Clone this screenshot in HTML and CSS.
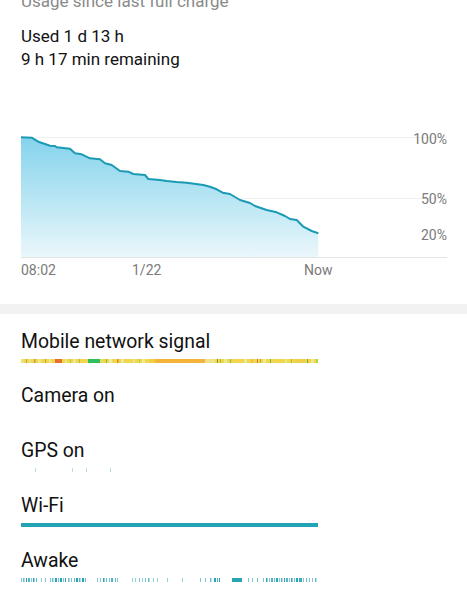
FILE: index.html
```html
<!DOCTYPE html>
<html lang="en">
<head>
  <meta charset="UTF-8">
  <meta name="viewport" content="width=device-width, initial-scale=1.0">
  <title>Battery usage</title>
  <link rel="stylesheet" href="styles.css">
</head>
<body>
  <div class="page">
    <!-- Summary -->
    <section class="summary">
      <h2 class="caption">Usage since last full charge</h2>
      <p class="line">Used 1 d 13 h</p>
      <p class="line">9 h 17 min remaining</p>
    </section>

    <!-- Battery level chart -->
    <div class="chart">
      <svg width="426" height="160" viewBox="0 0 426 160">
        <defs>
          <linearGradient id="fill" x1="0" y1="0" x2="0" y2="1">
            <stop offset="0" stop-color="#84d3ec"/>
            <stop offset="1" stop-color="#eaf7fb"/>
          </linearGradient>
        </defs>
        <line class="grid" x1="0" y1="17.5" x2="426" y2="17.5"/>
        <line class="grid" x1="0" y1="78.5" x2="426" y2="78.5"/>
        <line class="axis" x1="0" y1="137.5" x2="426" y2="137.5"/>
        <path fill="url(#fill)" d="M0,17.3 L10.7,17.7 L17.3,21.7 L24,24 L29,25.7 L34,26 L35.7,27.3 L49,28.7 L54,33.3 L60.7,34.3 L69,38.3 L79,39.3 L84,43.3 L90.7,45 L99,51 L107.3,51.7 L112.3,54 L124,55 L127.3,59 L139,60 L145.7,61 L155.7,62 L165.7,62.7 L182.3,65 L189,66.7 L195.7,69.3 L201.7,72.7 L209,74 L219,80 L229,83 L234,86 L245.7,90 L255.7,92.3 L264,96 L269,99 L275.7,100 L282.3,106.7 L290.7,111 L297.3,113.3 L297.3,137 L0,137 Z"/>
        <path class="level" d="M0,17.3 L10.7,17.7 L17.3,21.7 L24,24 L29,25.7 L34,26 L35.7,27.3 L49,28.7 L54,33.3 L60.7,34.3 L69,38.3 L79,39.3 L84,43.3 L90.7,45 L99,51 L107.3,51.7 L112.3,54 L124,55 L127.3,59 L139,60 L145.7,61 L155.7,62 L165.7,62.7 L182.3,65 L189,66.7 L195.7,69.3 L201.7,72.7 L209,74 L219,80 L229,83 L234,86 L245.7,90 L255.7,92.3 L264,96 L269,99 L275.7,100 L282.3,106.7 L290.7,111 L297.3,113.3"/>
        <text class="tick" x="426" y="23.5" text-anchor="end">100%</text>
        <text class="tick" x="426" y="84" text-anchor="end">50%</text>
        <text class="tick" x="426" y="120" text-anchor="end">20%</text>
        <text class="tick" x="0" y="155">08:02</text>
        <text class="tick" x="111" y="155">1/22</text>
        <text class="tick" x="283" y="155">Now</text>
      </svg>
    </div>

    <div class="divider"></div>

    <!-- Event rows -->
    <section class="events">
      <div class="event">
        <div class="event-title">Mobile network signal</div>
        <svg class="event-bar" width="297" height="4" viewBox="0 0 297 4">
          <rect x="0" y="0" width="297" height="4" fill="#f2d64b"/>
          <rect x="0" y="0" width="3" height="4" fill="#e8e27a"/>
          <rect x="5" y="0" width="1" height="4" fill="#e0a030"/>
          <rect x="8" y="0" width="2" height="4" fill="#dfe98a"/>
          <rect x="13" y="0" width="1.5" height="4" fill="#c9a23a"/>
          <rect x="17" y="0" width="3" height="4" fill="#e9ea8c"/>
          <rect x="24" y="0" width="1" height="4" fill="#d7a32c"/>
          <rect x="28" y="0" width="2" height="4" fill="#f0e68c"/>
          <rect x="34" y="0" width="7" height="4" fill="#e8702e"/>
          <rect x="44" y="0" width="2" height="4" fill="#e6ea8a"/>
          <rect x="49" y="0" width="1" height="4" fill="#b9c64a"/>
          <rect x="52" y="0" width="3" height="4" fill="#eee98c"/>
          <rect x="58" y="0" width="1" height="4" fill="#9ec43a"/>
          <rect x="67" y="0" width="12" height="4" fill="#2dbf62"/>
          <rect x="80" y="0" width="2" height="4" fill="#cfe36e"/>
          <rect x="85" y="0" width="1" height="4" fill="#8bb53a"/>
          <rect x="88" y="0" width="3" height="4" fill="#eeeaa0"/>
          <rect x="96" y="0" width="1.5" height="4" fill="#e08a30"/>
          <rect x="100" y="0" width="3" height="4" fill="#e9eb94"/>
          <rect x="112" y="0" width="2" height="4" fill="#dde985"/>
          <rect x="118" y="0" width="1" height="4" fill="#b6c94e"/>
          <rect x="121" y="0" width="3" height="4" fill="#eeea95"/>
          <rect x="128" y="0" width="6" height="4" fill="#f1cc45"/>
          <rect x="134" y="0" width="50" height="4" fill="#f4b43a"/>
          <rect x="184" y="0" width="10" height="4" fill="#f0e28a"/>
          <rect x="196" y="0" width="1" height="4" fill="#6fa83a"/>
          <rect x="199" y="0" width="1" height="4" fill="#9cbd3e"/>
          <rect x="203" y="0" width="3" height="4" fill="#e8e890"/>
          <rect x="209" y="0" width="1" height="4" fill="#8fb43a"/>
          <rect x="223" y="0" width="3" height="4" fill="#e9ea94"/>
          <rect x="230" y="0" width="2" height="4" fill="#f3c040"/>
          <rect x="236" y="0" width="1" height="4" fill="#e07a2e"/>
          <rect x="239" y="0" width="1" height="4" fill="#d6a43a"/>
          <rect x="242" y="0" width="3" height="4" fill="#eeea95"/>
          <rect x="249" y="0" width="1" height="4" fill="#7ab43e"/>
          <rect x="264" y="0" width="2" height="4" fill="#e5ea8a"/>
          <rect x="270" y="0" width="1" height="4" fill="#9ec43a"/>
          <rect x="274" y="0" width="10" height="4" fill="#f0d04a"/>
          <rect x="286" y="0" width="1" height="4" fill="#6fb03a"/>
          <rect x="290" y="0" width="3" height="4" fill="#f3e090"/>
          <rect x="295" y="0" width="2" height="4" fill="#a8d84a"/>
        </svg>
      </div>

      <div class="event">
        <div class="event-title">Camera on</div>
        <svg class="event-bar" width="297" height="4" viewBox="0 0 297 4"></svg>
      </div>

      <div class="event">
        <div class="event-title">GPS on</div>
        <svg class="event-bar" width="297" height="4" viewBox="0 0 297 4">
          <g fill="#b9dce6">
            <rect x="14" y="0" width="1" height="4"/>
            <rect x="51" y="0" width="1" height="4"/>
            <rect x="65" y="0" width="1" height="4"/>
            <rect x="89" y="0" width="1" height="4"/>
          </g>
        </svg>
      </div>

      <div class="event">
        <div class="event-title">Wi-Fi</div>
        <svg class="event-bar" width="297" height="4" viewBox="0 0 297 4">
          <rect x="0" y="0" width="297" height="4" fill="#22a4b5"/>
        </svg>
      </div>

      <div class="event">
        <div class="event-title">Awake</div>
        <svg class="event-bar" width="297" height="4" viewBox="0 0 297 4">
          <g fill="#2aa3b5">
            <rect x="0" y="0" width="1" height="4" opacity="0.6"/>
            <rect x="2" y="0" width="1.5" height="4" opacity="0.7"/>
            <rect x="5" y="0" width="1" height="4"/>
            <rect x="7" y="0" width="2" height="4" opacity="0.8"/>
            <rect x="10" y="0" width="1" height="4" opacity="0.6"/>
            <rect x="12" y="0" width="1.5" height="4"/>
            <rect x="15" y="0" width="1" height="4" opacity="0.7"/>
            <rect x="20" y="0" width="1" height="4" opacity="0.5"/>
            <rect x="24" y="0" width="1" height="4" opacity="0.6"/>
            <rect x="29" y="0" width="1" height="4" opacity="0.6"/>
            <rect x="31" y="0" width="1.5" height="4" opacity="0.7"/>
            <rect x="34" y="0" width="2" height="4"/>
            <rect x="37" y="0" width="1" height="4" opacity="0.7"/>
            <rect x="39" y="0" width="2" height="4"/>
            <rect x="42" y="0" width="1" height="4" opacity="0.6"/>
            <rect x="44" y="0" width="1" height="4"/>
            <rect x="47" y="0" width="1.5" height="4" opacity="0.7"/>
            <rect x="50" y="0" width="1" height="4" opacity="0.6"/>
            <rect x="53" y="0" width="1" height="4" opacity="0.7"/>
            <rect x="55" y="0" width="2" height="4"/>
            <rect x="58" y="0" width="1.5" height="4" opacity="0.8"/>
            <rect x="61" y="0" width="2" height="4"/>
            <rect x="64" y="0" width="1" height="4" opacity="0.7"/>
            <rect x="76" y="0" width="1" height="4" opacity="0.6"/>
            <rect x="79" y="0" width="1" height="4" opacity="0.6"/>
            <rect x="82" y="0" width="1.5" height="4"/>
            <rect x="85" y="0" width="1" height="4" opacity="0.7"/>
            <rect x="88" y="0" width="1" height="4" opacity="0.6"/>
            <rect x="90" y="0" width="2" height="4" opacity="0.8"/>
            <rect x="94" y="0" width="1" height="4" opacity="0.7"/>
            <rect x="96" y="0" width="1" height="4" opacity="0.6"/>
            <rect x="111" y="0" width="1" height="4" opacity="0.5"/>
            <rect x="114" y="0" width="1" height="4" opacity="0.5"/>
            <rect x="118" y="0" width="1" height="4" opacity="0.6"/>
            <rect x="121" y="0" width="1" height="4" opacity="0.5"/>
            <rect x="124" y="0" width="1" height="4" opacity="0.6"/>
            <rect x="127" y="0" width="1.5" height="4" opacity="0.7"/>
            <rect x="132" y="0" width="1" height="4" opacity="0.5"/>
            <rect x="136" y="0" width="1" height="4" opacity="0.5"/>
            <rect x="146" y="0" width="1" height="4" opacity="0.5"/>
            <rect x="161" y="0" width="1" height="4" opacity="0.5"/>
            <rect x="179" y="0" width="1" height="4" opacity="0.6"/>
            <rect x="184" y="0" width="1" height="4" opacity="0.6"/>
            <rect x="189" y="0" width="1.5" height="4" opacity="0.7"/>
            <rect x="193" y="0" width="2" height="4"/>
            <rect x="196" y="0" width="1" height="4" opacity="0.8"/>
            <rect x="198" y="0" width="1" height="4"/>
            <rect x="211" y="0" width="10" height="4"/>
            <rect x="227" y="0" width="1" height="4" opacity="0.6"/>
            <rect x="231" y="0" width="1" height="4" opacity="0.6"/>
            <rect x="236" y="0" width="1" height="4" opacity="0.7"/>
            <rect x="242" y="0" width="1" height="4" opacity="0.6"/>
            <rect x="245" y="0" width="1.5" height="4"/>
            <rect x="248" y="0" width="1" height="4" opacity="0.6"/>
            <rect x="250" y="0" width="2" height="4" opacity="0.8"/>
            <rect x="253" y="0" width="1" height="4" opacity="0.7"/>
            <rect x="255" y="0" width="2" height="4"/>
            <rect x="258" y="0" width="1" height="4" opacity="0.6"/>
            <rect x="260" y="0" width="1.5" height="4" opacity="0.8"/>
            <rect x="263" y="0" width="1" height="4"/>
            <rect x="265" y="0" width="2" height="4" opacity="0.8"/>
            <rect x="268" y="0" width="1" height="4" opacity="0.6"/>
            <rect x="270" y="0" width="1.5" height="4"/>
            <rect x="273" y="0" width="1" height="4" opacity="0.7"/>
            <rect x="275" y="0" width="2" height="4"/>
            <rect x="278" y="0" width="3" height="4" opacity="0.9"/>
            <rect x="282" y="0" width="1" height="4" opacity="0.6"/>
            <rect x="285" y="0" width="1" height="4" opacity="0.7"/>
            <rect x="288" y="0" width="1" height="4" opacity="0.6"/>
            <rect x="291" y="0" width="1" height="4" opacity="0.6"/>
            <rect x="294" y="0" width="1.5" height="4" opacity="0.7"/>
          </g>
        </svg>
      </div>
    </section>
  </div>
</body>
</html>
```

FILE: styles.css
```css
body {
  margin: 0;
  background-color: #ffffff;
  font-family: Roboto, "Liberation Sans", sans-serif;
  color: #111111;
  overflow: hidden;
}

.summary {
  padding: 0 21px;
}

.caption {
  margin: -10.8px 0 11.5px;
  font-size: 17px;
  font-weight: normal;
  line-height: 24px;
  color: #8a8a8a;
}

.line {
  margin: 0;
  font-size: 17px;
  line-height: 23px;
}

.chart {
  margin-top: 49.3px;
  padding-left: 21px;
  height: 160px;
}

.chart svg {
  display: block;
}

.grid {
  stroke: #f1f1f1;
  stroke-width: 1;
}

.axis {
  stroke: #e4e4e4;
  stroke-width: 1;
}

.level {
  fill: none;
  stroke: #1b9ab4;
  stroke-width: 2;
  stroke-linejoin: round;
}

.tick {
  font-family: Roboto, "Liberation Sans", sans-serif;
  font-size: 14px;
  fill: #7a7a7a;
}

.divider {
  margin-top: 24px;
  height: 10px;
  background-color: #f2f2f2;
}

.events {
  padding: 15.7px 21px 0;
}

.event {
  margin-bottom: 21.7px;
}

.event-title {
  font-size: 19.4px;
  line-height: 24px;
}

.event-bar {
  display: block;
  margin-top: 5.1px;
}
```
